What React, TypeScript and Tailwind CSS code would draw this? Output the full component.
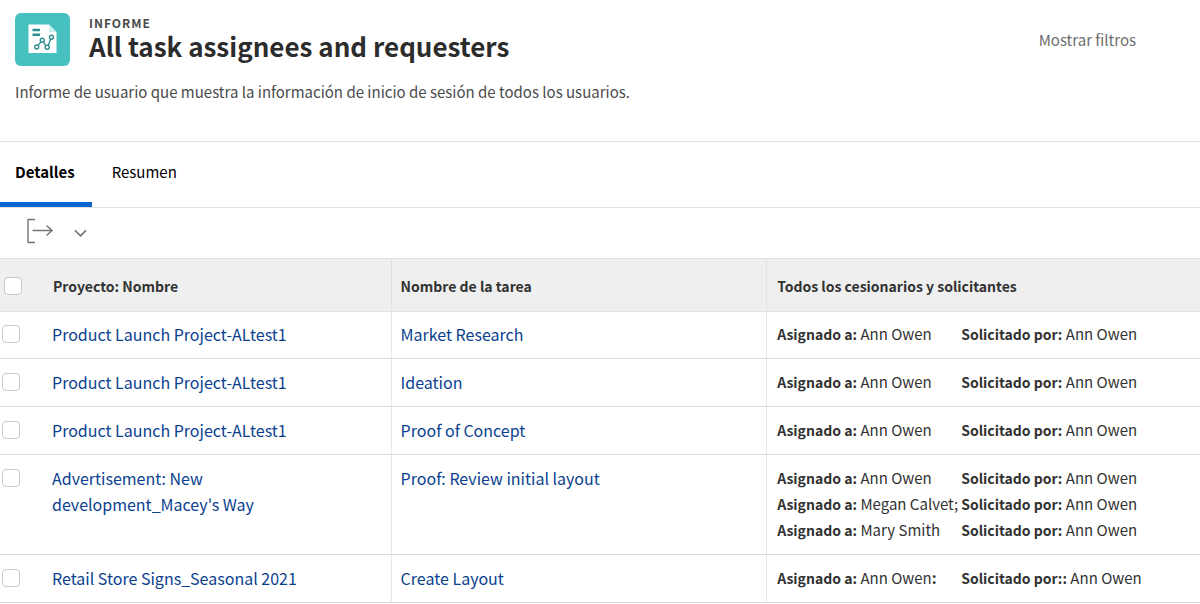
import React from 'react';

type Assignment = { assignee: string; requester: string; suffix?: string; requesterLabel?: string };
type Row = { project: string; task: string; people: Assignment[] };

const rows: Row[] = [
  { project: 'Product Launch Project-ALtest1', task: 'Market Research', people: [{ assignee: 'Ann Owen', requester: 'Ann Owen' }] },
  { project: 'Product Launch Project-ALtest1', task: 'Ideation', people: [{ assignee: 'Ann Owen', requester: 'Ann Owen' }] },
  { project: 'Product Launch Project-ALtest1', task: 'Proof of Concept', people: [{ assignee: 'Ann Owen', requester: 'Ann Owen' }] },
  {
    project: "Advertisement: New development_Macey's Way",
    task: 'Proof: Review initial layout',
    people: [
      { assignee: 'Ann Owen', requester: 'Ann Owen' },
      { assignee: 'Megan Calvet;', requester: 'Ann Owen' },
      { assignee: 'Mary Smith', requester: 'Ann Owen' },
    ],
  },
  {
    project: 'Retail Store Signs_Seasonal 2021',
    task: 'Create Layout',
    people: [{ assignee: 'Ann Owen', suffix: ':', requester: 'Ann Owen', requesterLabel: 'Solicitado por::' }],
  },
];

function ReportIcon() {
  return (
    <svg viewBox="0 0 55 54" className="h-[54px] w-[55px] shrink-0" aria-hidden="true">
      <rect y="1" width="55" height="53" rx="6" fill="#47c1bf" />
      <path d="M13.500 12.500H34l7.500 7.500V41h-28z" fill="#fff" />
      <path d="M34 12.500l7.500 7.500H34z" fill="#c9efed" />
      <path d="M17.500 18h7.500M17.500 22.700h7.500" stroke="#2f8f91" strokeWidth="2.400" />
      <g fill="none" stroke="#2f8f91" strokeWidth="1.400">
        <path d="M23 33.600l3-4M28.200 29.700l2.700 4M33.200 33.400l2.600-6.500" />
        <circle cx="21.700" cy="35" r="2" />
        <circle cx="27.200" cy="28.200" r="1.900" />
        <circle cx="32.200" cy="35.200" r="2" />
        <circle cx="36.500" cy="25.300" r="2" />
      </g>
    </svg>
  );
}

function Check({ label }: { label: string }) {
  return (
    <input
      type="checkbox"
      aria-label={label}
      className="block size-[18px] appearance-none rounded-[4px] border border-[#c8c8c8] bg-white checked:bg-[#0d66d0]"
    />
  );
}

export default function App() {
  return (
    <main className="bg-white font-['Noto_Sans_CJK_SC','Noto_Sans',sans-serif] text-[#323232]">
      <header className="border-b border-[#e1e1e1] pt-3 pb-[37px] pl-[15px]">
        <div className="flex items-start">
          <ReportIcon />
          <div className="ml-[19px] flex-1">
            <p className="pt-1 text-xs leading-[14px] font-bold tracking-[1px] text-[#4b4b4b]">INFORME</p>
            <h1 className="text-[26px] leading-8 font-bold text-[#2c2c2c]">All task assignees and requesters</h1>
          </div>
          <button type="button" className="mt-4 mr-16 text-[15px] leading-6 text-[#6e6e6e]">
            Mostrar filtros
          </button>
        </div>
        <p className="mt-[14px] text-[15px] leading-6 text-[#4b4b4b]">
          Informe de usuario que muestra la información de inicio de sesión de todos los usuarios.
        </p>
      </header>

      <div role="tablist" className="flex h-[66px] border-b border-[#e1e1e1] text-[15px] text-black">
        <button type="button" role="tab" aria-selected="true" className="border-b-5 border-[#0d66d0] pr-[17px] pl-[15px] font-bold">
          Detalles
        </button>
        <button type="button" role="tab" aria-selected="false" className="border-b-5 border-transparent px-5">
          Resumen
        </button>
      </div>

      <div className="flex h-[50px] items-center gap-5 pl-[26px]">
        <button type="button" aria-label="Exportar">
          <svg viewBox="0 0 28 26" className="-mt-1 h-[26px] w-7" fill="none" stroke="#747474" strokeWidth="1.400">
            <path d="M9 1.500H2.500Q2 1.500 2 2v22q0 .5.5.5H9" />
            <path d="M6.500 12.500H26M20.500 7.500l5.500 5-5.500 5" />
          </svg>
        </button>
        <button type="button" aria-label="Opciones de exportación">
          <svg viewBox="0 0 14 10" className="h-[10px] w-[13px]" fill="none" stroke="#6e6e6e" strokeWidth="1.700">
            <path d="M1 2l6 6 6-6" />
          </svg>
        </button>
      </div>

      <table className="w-full table-fixed border-separate border-spacing-0 text-left">
        <colgroup>
          <col className="w-10" />
          <col className="w-[29.3%]" />
          <col className="w-[31.3%]" />
          <col />
        </colgroup>
        <thead>
          <tr className="bg-[#efefef] text-[14px] leading-[26px] [&>th]:border-y [&>th]:border-[#e1e1e1] [&>th]:pt-[14px] [&>th]:pb-[12px] [&>th]:align-middle">
            <th className="pl-1"><Check label="Seleccionar todo" /></th>
            <th scope="col" className="border-r pl-[13px] font-bold">Proyecto: Nombre</th>
            <th scope="col" className="border-r pl-[9px] font-bold">Nombre de la tarea</th>
            <th scope="col" className="pl-[10px] font-bold">Todos los cesionarios y solicitantes</th>
          </tr>
        </thead>
        <tbody>
          {rows.map((row, i) => (
            <tr key={i} className="leading-[26px] [&>td]:border-b [&>td]:border-b-[#d9d9d9] [&>td]:pt-[10px] [&>td]:pb-[11px] [&>td]:align-top first:[&>td]:pt-[9px]">
              <td className="pl-[2px]">
                <div className="pt-1"><Check label={`Seleccionar ${row.task}`} /></div>
              </td>
              <td className="border-r border-r-[#e8e8e8] pr-8 pl-3 text-[16px]">
                <a href="#" className="text-[#0b3f8f]">{row.project}</a>
              </td>
              <td className="border-r border-r-[#e8e8e8] pl-[9px] text-[16px]">
                <a href="#" className="text-[#0b3f8f]">{row.task}</a>
              </td>
              <td className="pl-[10px] text-[15px]">
                {row.people.map((p, j) => (
                  <div key={j} className="grid h-[26px] grid-cols-[184px_1fr] whitespace-nowrap">
                    <span>
                      <b className="text-[14px]">Asignado a:</b> {p.assignee}
                      {p.suffix && <b>{p.suffix}</b>}
                    </span>
                    <span>
                      <b className="text-[14px]">{p.requesterLabel ?? 'Solicitado por:'}</b> {p.requester}
                    </span>
                  </div>
                ))}
              </td>
            </tr>
          ))}
        </tbody>
      </table>
    </main>
  );
}
